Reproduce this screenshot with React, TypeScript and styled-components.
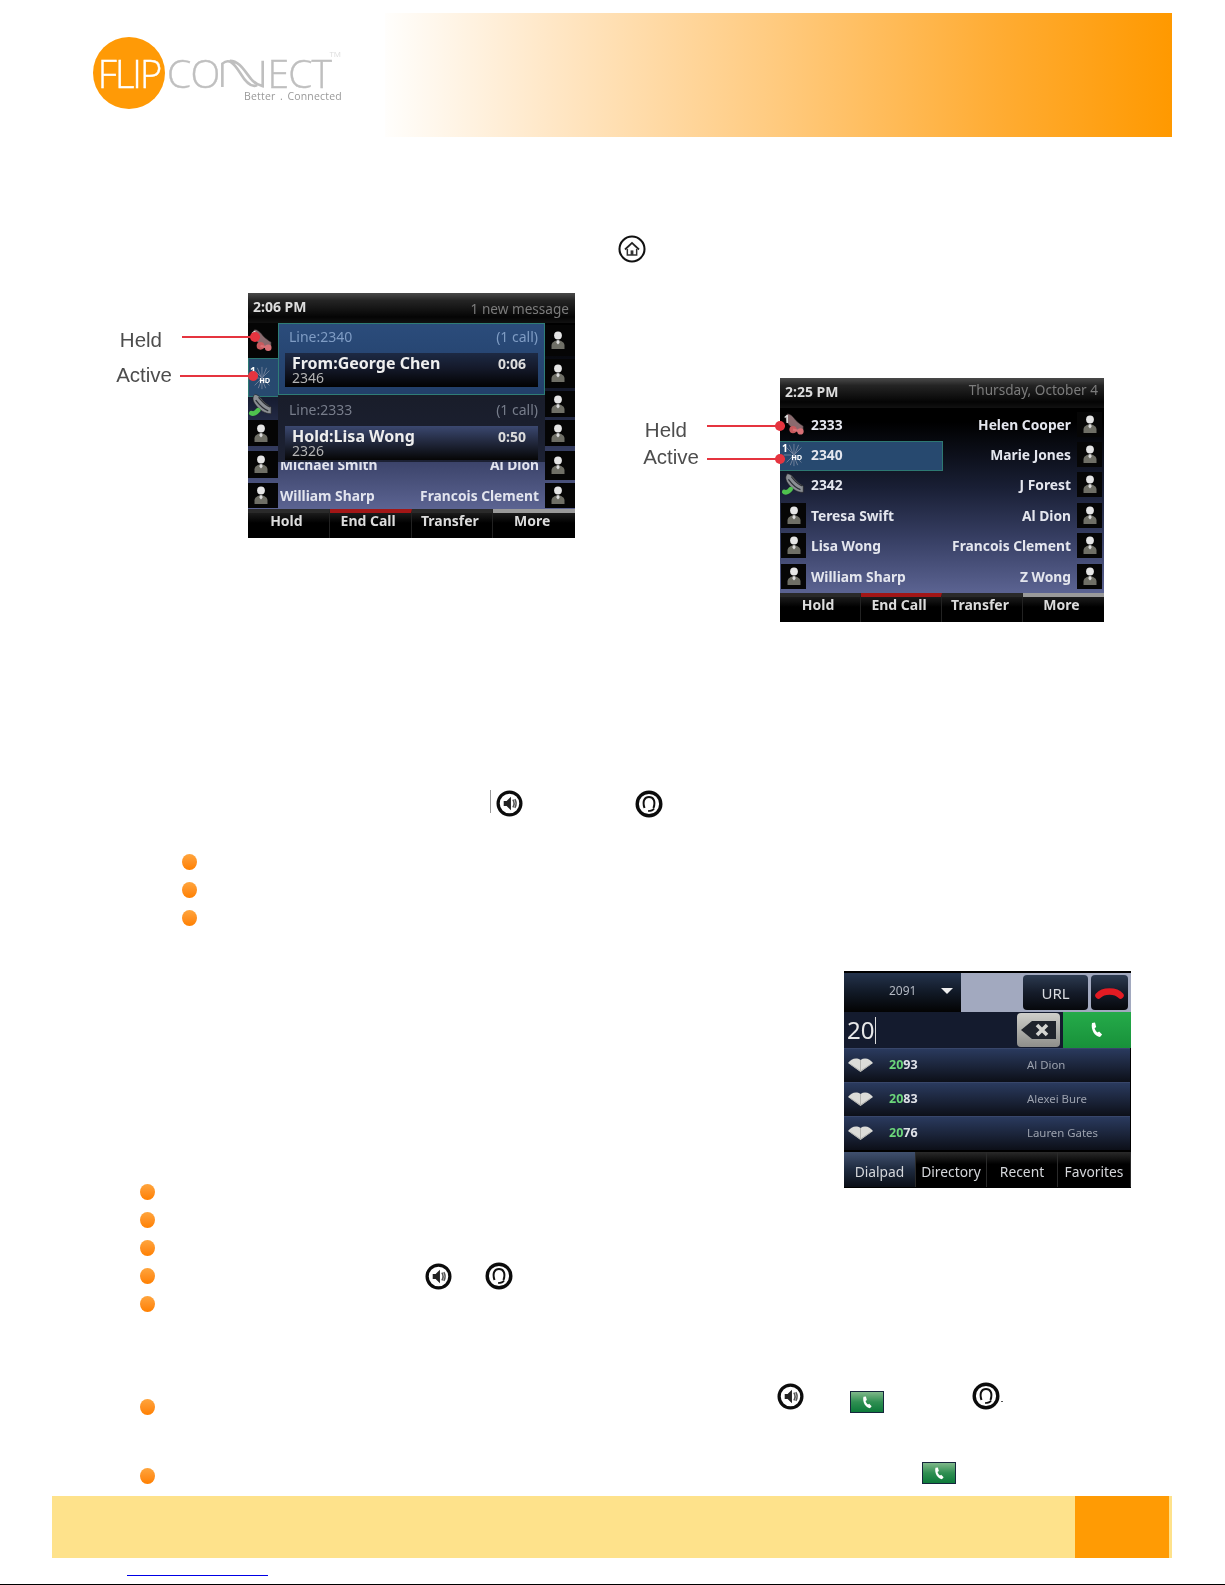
import React from "react";
import styled, { createGlobalStyle } from "styled-components";

const GlobalStyle = createGlobalStyle`
  html, body {
    margin: 0;
    padding: 0;
    background: #fff;
  }
  body {
    font-family: "Noto Sans", "Open Sans", sans-serif;
  }
`

const Page = styled.div`
  width: 1225px;
  height: 1585px;
  overflow: hidden;
  display: flex;
  flex-direction: column;
  background: #fff;
`

/* header */

const Header = styled.header`
  display: flex;
  margin-top: 13px;
  height: 124px;
  padding-left: 93px;
`

const LogoWrap = styled.div`
  display: flex;
  width: 292px;
  padding-top: 24px;
  gap: 2px;
`

const LogoCircle = styled.div`
  width: 72px;
  height: 72px;
  flex: none;
  border-radius: 50%;
  background: #ff9a06;
  color: #fff;
  display: flex;
  align-items: center;
  justify-content: center;
  font: 300 38px "Open Sans", sans-serif;
  letter-spacing: -2px;
  -webkit-text-stroke: .4px #fff;
  filter: blur(.3px);
`

const Wordmark = styled.div`
  position: relative;
  display: flex;
  flex-direction: column;
  align-items: flex-end;
  padding-top: 21px;
  width: 176px;
  filter: blur(.3px);
`

const WordLine = styled.div`
  display: flex;
  align-items: center;
  height: 30px;
  width: 100%;
  color: #bfbfbf;
  font: 300 39px/30px "Open Sans", sans-serif;
  letter-spacing: -.8px;
  -webkit-text-stroke: .4px #bfbfbf;
`

const Tagline = styled.div`
  margin: 2px 1px 0 0;
  color: #999;
  font: 400 10.5px/13px "Open Sans", sans-serif;
  letter-spacing: .2px;
  word-spacing: 1.5px;
  white-space: pre;
`

const TradeMark = styled.span`
  position: absolute;
  top: 12px;
  right: 2px;
  color: #ddd;
  font: 400 8px/9px "Open Sans", sans-serif;
`

const Banner = styled.div`
  width: 787px;
  background: linear-gradient(90deg, #fffefc 0%, #ffe6c4 22%, #ffca7e 50%, #ffac33 78%, #ff9900 100%);
`

/* icon rows */

const HomeRow = styled.div`
  margin-top: 98px;
  height: 31px;
  padding-left: 618px;
`

const RingSvg = styled.svg`
  display: block;
  flex: none;
  filter: blur(.45px);
`

const FigureRow = styled.div`
  display: flex;
  align-items: flex-start;
  margin-top: 27px;
  padding-left: 248px;
  gap: 205px;
`

const Figure = styled.figure<{ $offset: number }>`
  position: relative;
  margin: ${({ $offset }) => $offset}px 0 0;
`

const Callout = styled.div<{ $top: number; $dotRight: number; $gap: number }>`
  position: absolute;
  top: ${({ $top }) => $top}px;
  right: calc(100% - ${({ $dotRight }) => $dotRight}px);
  z-index: 2;
  display: flex;
  align-items: center;
  gap: ${({ $gap }) => $gap}px;
  height: 24px;
`

const CalloutLabel = styled.span<{ $shift: number }>`
  color: #4d4d4d;
  font: 400 20.5px/24px "Liberation Sans", Arial, sans-serif;
  transform: translateY(${({ $shift }) => $shift}px);
  filter: blur(.35px);
`

const CalloutLine = styled.span`
  position: relative;
  display: block;
  width: 78px;
  height: 2.5px;
  background: #e5343f;

  &::after {
    content: "";
    position: absolute;
    right: 0;
    top: -4px;
    width: 10px;
    height: 10px;
    border-radius: 50%;
    background: #e5343f;
  }
`

/* phone screens */

const Screen = styled.div<{ $w: number; $h: number }>`
  width: ${({ $w }) => $w}px;
  height: ${({ $h }) => $h}px;
  display: flex;
  flex-direction: column;
  overflow: hidden;
  color: #e6e6e6;
  font-family: "Noto Sans", sans-serif;
  filter: blur(.5px);
  background: linear-gradient(180deg, #000 0%, #000 18%, #191f35 45%, #3a4268 68%, #626a9a 92%);
`

const TopBar = styled.div`
  height: 30px;
  flex: none;
  display: flex;
  align-items: center;
  justify-content: space-between;
  padding: 0 6px 0 5px;
  background: linear-gradient(180deg, #4a4a4a 0%, #242424 25%, #050505 80%, #111 100%);
`

const Clock = styled.span`
  margin-bottom: 4px;
  font-size: 14px;
  font-weight: 700;
  color: #ddd;
`

const Status = styled.span<{ $lift?: number }>`
  margin-bottom: ${({ $lift }) => $lift || 0}px;
  font-size: 13.6px;
  color: #7c7c7c;
`

const ScreenBody = styled.div`
  flex: 1;
  min-height: 0;
  display: flex;
`

const KeyColumn = styled.div<{ $w: number }>`
  width: ${({ $w }) => $w}px;
  flex: none;
  display: flex;
  flex-direction: column;
`

const KeyCell = styled.div<{ $h: number; $mt?: number; $pb?: number; $tone?: "black" | "active" | "none" }>`
  height: ${({ $h }) => $h}px;
  box-sizing: border-box;
  margin-top: ${({ $mt }) => $mt || 0}px;
  padding: 0 4px ${({ $pb }) => $pb || 0}px 0;
  flex: none;
  display: flex;
  align-items: center;
  justify-content: center;
  background: ${({ $tone }) => ($tone === "active" ? "#27496f" : $tone === "none" ? "transparent" : "#050505")};
  border: ${({ $tone }) => ($tone === "active" ? "1px solid #2d7872" : "0")};
  border-right: 0;
`

const CenterColumn = styled.div`
  flex: 1;
  min-width: 0;
  display: flex;
  flex-direction: column;
`

const LinePanel = styled.div<{ $active?: boolean; $h: number }>`
  position: relative;
  z-index: 1;
  height: ${({ $h }) => $h}px;
  flex: none;
  box-sizing: border-box;
  padding: ${({ $active }) => ($active ? "3px 6px 0 6px" : "5px 7px 0 7px")};
  border: ${({ $active }) => ($active ? "1px solid #2f7d76" : "0")};
  background: ${({ $active }) =>
    $active ? "linear-gradient(180deg, #2b4c7b, #223f69)" : "linear-gradient(180deg, #191d2a, #1c2133)"};
`

const LineHead = styled.div<{ $active?: boolean }>`
  display: flex;
  justify-content: space-between;
  padding-left: 4px;
  font-size: 14px;
  line-height: 19px;
  color: ${({ $active }) => ($active ? "#7f9cc4" : "#777d8b")};
`

const CallBox = styled.div<{ $held?: boolean }>`
  display: flex;
  justify-content: space-between;
  box-sizing: border-box;
  height: 34px;
  margin-top: 7px;
  padding: 1px 12px 0 7px;
  background: ${({ $held }) =>
    $held
      ? "linear-gradient(180deg, #3b4870 0%, #232a40 45%, #060606 100%)"
      : "linear-gradient(180deg, #1d2a44 0%, #14192a 45%, #020202 100%)"};
`

const CallText = styled.div`
  display: flex;
  flex-direction: column;
`

const CallName = styled.span`
  font-size: 16px;
  font-weight: 700;
  line-height: 19px;
  color: #eee;
`

const CallNumber = styled.span`
  font-size: 14px;
  line-height: 10px;
  color: #b4b4b4;
`

const CallTime = styled.span`
  font-size: 14px;
  font-weight: 700;
  line-height: 19px;
  color: #ddd;
`

const ContactRow = styled.div<{ $under?: boolean }>`
  display: flex;
  align-items: center;
  justify-content: space-between;
  height: 31px;
  flex: none;
  margin-top: ${({ $under }) => ($under ? "-13px" : "0")};
  padding: 0 6px 0 2px;
  font-size: 13.8px;
  font-weight: 700;
  color: #e2e4ee;
`

const SoftKeys = styled.div`
  height: 29px;
  flex: none;
  display: grid;
  grid-template-columns: repeat(4, 1fr);
  background: #000;
`

const SoftKey = styled.div<{ $mark?: string }>`
  display: flex;
  align-items: center;
  justify-content: center;
  padding: 0 4px 10px 0;
  font-size: 14px;
  line-height: 14px;
  font-weight: 700;
  color: #dcdcdc;
  border-top: 4px solid ${({ $mark }) => $mark || "#2a2a2a"};
  border-right: 1px solid #222;
  background: linear-gradient(180deg, #1c1c1c, #000 40%);

  &:last-child {
    border-right: 0;
  }
`

const ListGrid = styled.div`
  flex: 1;
  min-height: 0;
  padding-top: 1px;
  display: flex;
  flex-direction: column;
`

const ListRow = styled.div`
  height: 30.4px;
  flex: none;
  display: flex;
  align-items: center;
  justify-content: space-between;
  font-size: 13.8px;
  font-weight: 700;
  color: #e4e6ee;
`

const LineSide = styled.div<{ $active?: boolean }>`
  display: flex;
  align-items: center;
  gap: 5px;
  box-sizing: border-box;
  width: 163px;
  height: 30px;
  margin-top: ${({ $active }) => ($active ? 3 : 0)}px;
  padding-left: 1px;
  padding-bottom: ${({ $active }) => ($active ? 3 : 0)}px;
  background: ${({ $active }) => ($active ? "#27496f" : "transparent")};
  border: ${({ $active }) => ($active ? "1px solid #2d7872" : "1px solid transparent")};
  border-left: 0;
`

const LeftTile = styled.div<{ $black?: boolean }>`
  width: 25px;
  height: 25px;
  flex: none;
  display: flex;
  align-items: center;
  justify-content: center;
  background: ${({ $black }) => ($black ? "#060606" : "transparent")};
`

const ContactSide = styled.div`
  display: flex;
  align-items: center;
  gap: 6px;
  padding-right: 2px;
`

/* dial screen */

const DialSection = styled.section`
  margin-top: 45px;
  height: 347px;
  flex: none;
  display: grid;
  grid-template-columns: 844px 287px;
`

const DialScreen = styled.div`
  height: 217px;
  display: flex;
  flex-direction: column;
  overflow: hidden;
  background: #000;
  color: #ddd;
  font-family: "Noto Sans", sans-serif;
  filter: blur(.45px);
  border-top: 2px solid #000;
  box-sizing: border-box;
`

const DialTop = styled.div`
  height: 39px;
  flex: none;
  display: flex;
  background: #a2a9bf;
`

const LineSelect = styled.div`
  width: 117px;
  display: flex;
  align-items: center;
  gap: 25px;
  padding: 0 0 4px 45px;
  box-sizing: border-box;
  font-size: 12px;
  color: #b3b8c2;
  background: linear-gradient(180deg, #24334c 0%, #111926 50%, #030303 100%);
`

const Caret = styled.span`
  width: 0;
  height: 0;
  border-left: 6px solid transparent;
  border-right: 6px solid transparent;
  border-top: 6px solid #eee;
`

const TopButtons = styled.div`
  flex: 1;
  display: flex;
  justify-content: flex-end;
  gap: 3px;
  padding: 2px 3px 2px 0;
`

const TopButton = styled.div<{ $w: number }>`
  width: ${({ $w }) => $w}px;
  display: flex;
  align-items: center;
  justify-content: center;
  font-size: 15px;
  line-height: 20px;
  color: #d8dbe0;
  border-radius: 4px;
  background: linear-gradient(180deg, #2c3a50 0%, #151c2a 50%, #06080c 100%);
`

const InputRow = styled.div`
  height: 36px;
  flex: none;
  display: flex;
  align-items: center;
  background: #141b2e;
`

const DialedNumber = styled.div`
  flex: 1;
  padding-left: 3px;
  font-size: 24px;
  line-height: 30px;
  color: #e8e8e8;
`

const Cursor = styled.span`
  display: inline-block;
  width: 1px;
  height: 27px;
  margin-left: 1px;
  vertical-align: -5px;
  background: #ddd;
`

const BackspaceKey = styled.div`
  width: 43px;
  height: 34px;
  margin-right: 3px;
  display: flex;
  align-items: center;
  justify-content: center;
  border-radius: 4px;
  background: linear-gradient(180deg, #cfcfca, #8e8e8a);
`

const CallKey = styled.div`
  width: 68px;
  height: 36px;
  display: flex;
  align-items: center;
  justify-content: center;
  background: linear-gradient(180deg, #25ab4a, #18913a);
`

const ResultRow = styled.div`
  height: 34px;
  flex: none;
  box-sizing: border-box;
  display: flex;
  align-items: center;
  padding: 0 0 2px 4px;
  margin-right: 1px;
  border-top: 1px solid #38466a;
  background: linear-gradient(180deg, #2a3a5e 0%, #1a2338 55%, #0c0f18 100%);
`

const ResultNumber = styled.span`
  width: 138px;
  margin-left: 16px;
  font-size: 12.5px;
  font-weight: 700;
  color: #dfe2e8;
`

const Match = styled.span`
  color: #6bd67a;
`

const ResultName = styled.span`
  font-size: 11.4px;
  color: #9ca2ae;
`

const DialTabs = styled.div`
  flex: none;
  margin-top: 2px;
  height: 35px;
  display: grid;
  grid-template-columns: 72px 71px 71px 73px;
`

const DialTab = styled.div<{ $active?: boolean }>`
  display: flex;
  align-items: center;
  justify-content: center;
  padding-top: 3px;
  font-size: 13.8px;
  color: #d4d6da;
  border-right: 1px solid #2a2a2a;
  background: ${({ $active }) =>
    $active ? "linear-gradient(180deg, #40506e, #1e2a3e 50%, #0a0e16)" : "linear-gradient(180deg, #2a2a2a, #000 35%)"};
`

/* bullets */

const Bullet = styled.span`
  display: block;
  flex: none;
  width: 15px;
  height: 16px;
  border-radius: 50%;
  background: linear-gradient(180deg, #ffa53d 0%, #ff9020 55%, #ff8000 100%);
`

const SpeakerRow = styled.div`
  display: flex;
  margin-top: 168px;
  height: 29px;
  padding-left: 490px;
`

const Divider = styled.span`
  width: 1px;
  height: 23px;
  background: #999;
  margin-right: 5px;
`

const ShortList = styled.div`
  display: flex;
  flex-direction: column;
  gap: 12px;
  margin-top: 35px;
  padding-left: 182px;
`

const SideList = styled.div`
  align-self: end;
  display: flex;
  flex-direction: column;
  padding-left: 140px;
`

const SideItem = styled.div`
  height: 28px;
  display: flex;
  align-items: center;
`

const StepRow = styled.div<{ $mt: number; $h: number; $align: string }>`
  display: flex;
  margin-top: ${({ $mt }) => $mt}px;
  height: ${({ $h }) => $h}px;
  padding-left: 140px;
  align-items: ${({ $align }) => $align};
`

const Spaced = styled.div<{ $ml: number; $mt?: number }>`
  margin-left: ${({ $ml }) => $ml}px;
  margin-top: ${({ $mt }) => $mt || 0}px;
  flex: none;
`

const Period = styled.span`
  margin: 18px 0 0 1px;
  width: 2px;
  height: 1px;
  background: #555;
`

const CallChip = styled.div`
  width: 34px;
  height: 22px;
  box-sizing: border-box;
  display: flex;
  align-items: center;
  justify-content: center;
  border: 1px solid #15263c;
  background: linear-gradient(180deg, #7fb88a 0%, #2f8f52 50%, #0d7a3a 100%);
  filter: blur(.25px);
`

/* footer */

const Footer = styled.footer`
  flex: none;
  display: flex;
  justify-content: flex-end;
  margin: 12px 0 0 52px;
  width: 1120px;
  height: 62px;
  background: #fee28b;
`

const PageTab = styled.div`
  width: 94px;
  margin-right: 3px;
  background: #ff9b04;
`

const LinkLine = styled.div`
  flex: none;
  margin: 17px 0 0 127px;
  width: 141px;
  height: 1px;
  background: #0000e6;
`

const BottomRule = styled.div`
  flex: none;
  margin-top: 8px;
  height: 1px;
  background: #000;
`

/* drawings */

function Ring({ size, children }: { size: number; children: React.ReactNode }) {
  return (
    <RingSvg width={size} height={size} viewBox="0 0 28 28">
      <circle cx="14" cy="14" r="11.8" fill="#fff" stroke="#0c0c0c" strokeWidth="3.4" />
      {children}
    </RingSvg>
  )
}

function SpeakerIcon({ size = 27 }: { size?: number }) {
  return (
    <Ring size={size}>
      <path d="M8 11.5h3l4.5-4.5v14l-4.5-4.5H8z" fill="#222" />
      <path d="M17.5 10q2.5 4 0 8M19.5 9.5q2.8 4.5 0 9" fill="none" stroke="#555" strokeWidth="1.6" />
    </Ring>
  )
}

function HeadsetIcon({ size = 28 }: { size?: number }) {
  return (
    <Ring size={size}>
      <path d="M9.5 18C7 10.5 10 7 14 7s7 3.5 4.5 11" fill="none" stroke="#111" strokeWidth="2" />
      <path d="M19 18.5c-1 2-3 2.5-6 2.5" fill="none" stroke="#111" strokeWidth="1.7" />
    </Ring>
  )
}

function HomeIcon() {
  return (
    <RingSvg width="28" height="28" viewBox="0 0 30 30">
      <circle cx="15" cy="15" r="13.4" fill="#fff" stroke="#111" strokeWidth="2.2" />
      <path d="M7.5 15.5 15 8.5l7.5 7" fill="none" stroke="#222" strokeWidth="2" />
      <path d="M10 15v6.5h10V15" fill="none" stroke="#333" strokeWidth="1.6" />
      <rect x="13.5" y="16.5" width="3" height="5" fill="#333" />
    </RingSvg>
  )
}

function ContactIcon() {
  return (
    <svg width="18" height="21" viewBox="0 0 18 21">
      <circle cx="9" cy="5.5" r="3.9" fill="#e6e6e6" />
      <path d="M2.5 19v-3.5c0-3 3-5 6.5-5s6.5 2 6.5 5V19z" fill="#6f6f66" />
      <path d="M7.8 10.3h2.4l.4 2.5L9 14.5l-1.6-1.7z" fill="#dcdcdc" />
    </svg>
  )
}

function HandsetShape({ color }: { color: string }) {
  return (
    <path
      d="M7 2c3 0 6 3 9 7 3 3 6 5 8 6v7c-7 0-12-4-16-9C5 9 4 5 7 2z"
      fill={color}
      stroke="#222"
      strokeWidth=".6"
    />
  )
}

function LineIcon({ kind }: { kind: "held" | "active" | "ready" }) {
  if (kind === "active") {
    return (
      <svg width="27" height="28" viewBox="0 0 27 28">
        <g stroke="#74829b" strokeWidth="1">
          <path d="M14 2v24M6 6l16 16M22 6 6 22M3 14h8M9 3l9 22M19 3l-9 22" />
        </g>
        <text x="1" y="11" fontSize="11" fontWeight="700" fill="#fff" fontFamily="Noto Sans">1</text>
        <text x="11" y="19" fontSize="8" fontWeight="700" fill="#fff" fontFamily="Noto Sans">HD</text>
      </svg>
    )
  }
  if (kind === "ready") {
    return (
      <svg width="27" height="27" viewBox="0 0 27 27">
        <HandsetShape color="#8b8f94" />
        <path d="M11 5c3 3 6 8 12 10M8 8c3 4 7 9 13 11" fill="none" stroke="#2c2f34" strokeWidth="1.3" />
        <path d="M3.5 21.5c2 1 5-.5 7-3" fill="none" stroke="#4fc24e" strokeWidth="5" strokeLinecap="round" />
      </svg>
    )
  }
  return (
    <svg width="27" height="27" viewBox="0 0 27 27">
      <HandsetShape color="#8a6a6e" />
      <text x="3" y="12" fontSize="11" fontWeight="700" fill="#ddd" fontFamily="Noto Sans">1</text>
      <circle cx="13" cy="19" r="4" fill="#c95a5e" />
      <circle cx="21" cy="21" r="3.4" fill="#d87076" />
      <path d="M13 19l8 2" stroke="#d87076" strokeWidth="2.4" />
    </svg>
  )
}

function BookIcon() {
  return (
    <svg width="25" height="15" viewBox="0 0 25 15">
      <path d="M0 6c3-4 8-6 12.5-3C17 0 22 2 25 6l-12.5 9z" fill="#dcdcd8" />
      <path d="M12.5 3v12M2 7l10.5 7M23 7l-10.5 7" stroke="#a8a8a4" strokeWidth=".8" fill="none" />
    </svg>
  )
}

function Handset({ size, color = "#fff" }: { size: number; color?: string }) {
  return (
    <svg width={size} height={size} viewBox="0 0 16 16">
      <path d="M3 1l3-.5L7.2 5 5.6 6.2c.5 1.8 1.5 3.3 3 4.3l1.5-1 3 3L11 15C6 14.5 1.5 8 3 1z" fill={color} />
    </svg>
  )
}

function HangUp() {
  return (
    <svg width="29" height="12" viewBox="0 0 29 12">
      <path d="M3.5 8.5C8 3 21 3 25.5 8.5" fill="none" stroke="#e31b23" strokeWidth="6.5" strokeLinecap="round" />
    </svg>
  )
}

function BackspaceGlyph() {
  return (
    <svg width="35" height="20" viewBox="0 0 35 20">
      <path d="M0 10 11 1h24v18H11z" fill="#20242c" />
      <path d="M16 5l10 10M26 5 16 15" stroke="#d4d4d0" strokeWidth="3.6" />
    </svg>
  )
}

function LogoWave() {
  return (
    <svg width="48" height="30" viewBox="0 0 48 32">
      <path
        d="M2 31V6C9 0 14 5 21 16c6 10 12 16 18 13M10 3c11 0 16 12 24 21 3 3 7 5 11 6V3"
        fill="none"
        stroke="#bfbfbf"
        strokeWidth="2.8"
      />
    </svg>
  )
}

/* data */

const softKeys = [
  { label: "Hold" },
  { label: "End Call", mark: "#a21616" },
  { label: "Transfer" },
  { label: "More", mark: "#9a9a9a" },
]

const firstRight = [
  { h: 31, mt: 2 },
  { h: 29, mt: 3 },
  { h: 26, mt: 3 },
  { h: 26, mt: 3 },
  { h: 29, mt: 5 },
  { h: 25, mt: 3 },
]

const lineRows = [
  { left: "2333", right: "Helen Cooper", icon: "held" as const },
  { left: "2340", right: "Marie Jones", icon: "active" as const, active: true },
  { left: "2342", right: "J Forest", icon: "ready" as const },
  { left: "Teresa Swift", right: "Al Dion" },
  { left: "Lisa Wong", right: "Francois Clement" },
  { left: "William Sharp", right: "Z Wong" },
]

const results = [
  { match: "20", rest: "93", name: "Al Dion" },
  { match: "20", rest: "83", name: "Alexei Bure" },
  { match: "20", rest: "76", name: "Lauren Gates" },
]

function SoftKeyBar() {
  return (
    <SoftKeys>
      {softKeys.map((key) => (
        <SoftKey key={key.label} $mark={key.mark}>{key.label}</SoftKey>
      ))}
    </SoftKeys>
  )
}

function CallScreen() {
  return (
    <Screen $w={327} $h={245}>
      <TopBar>
        <Clock>2:06 PM</Clock>
        <Status>1 new message</Status>
      </TopBar>
      <ScreenBody>
        <KeyColumn $w={30}>
          <KeyCell $h={35}><LineIcon kind="held" /></KeyCell>
          <KeyCell $h={39} $tone="active"><LineIcon kind="active" /></KeyCell>
          <KeyCell $h={23} $pb={7} $tone="none"><LineIcon kind="ready" /></KeyCell>
          <KeyCell $h={26}><ContactIcon /></KeyCell>
          <KeyCell $h={27} $mt={5}><ContactIcon /></KeyCell>
          <KeyCell $h={25} $mt={5}><ContactIcon /></KeyCell>
        </KeyColumn>
        <CenterColumn>
          <LinePanel $active $h={72}>
            <LineHead $active>
              <span>Line:2340</span>
              <span>(1 call)</span>
            </LineHead>
            <CallBox>
              <CallText>
                <CallName>From:George Chen</CallName>
                <CallNumber>2346</CallNumber>
              </CallText>
              <CallTime>0:06</CallTime>
            </CallBox>
          </LinePanel>
          <LinePanel $h={67}>
            <LineHead>
              <span>Line:2333</span>
              <span>(1 call)</span>
            </LineHead>
            <CallBox $held>
              <CallText>
                <CallName>Hold:Lisa Wong</CallName>
                <CallNumber>2326</CallNumber>
              </CallText>
              <CallTime>0:50</CallTime>
            </CallBox>
          </LinePanel>
          <ContactRow $under>
            <span>Michael Smith</span>
            <span>Al Dion</span>
          </ContactRow>
          <ContactRow>
            <span>William Sharp</span>
            <span>Francois Clement</span>
          </ContactRow>
        </CenterColumn>
        <KeyColumn $w={30}>
          {firstRight.map((cell, i) => (
            <KeyCell key={i} $h={cell.h} $mt={cell.mt}><ContactIcon /></KeyCell>
          ))}
        </KeyColumn>
      </ScreenBody>
      <SoftKeyBar />
    </Screen>
  )
}

function LinesScreen() {
  return (
    <Screen $w={324} $h={244}>
      <TopBar>
        <Clock>2:25 PM</Clock>
        <Status $lift={8}>Thursday, October 4</Status>
      </TopBar>
      <ListGrid>
        {lineRows.map((row) => (
          <ListRow key={row.left}>
            <LineSide $active={row.active}>
              <LeftTile $black={!row.icon}>
                {row.icon ? <LineIcon kind={row.icon} /> : <ContactIcon />}
              </LeftTile>
              <span>{row.left}</span>
            </LineSide>
            <ContactSide>
              <span>{row.right}</span>
              <LeftTile $black><ContactIcon /></LeftTile>
            </ContactSide>
          </ListRow>
        ))}
      </ListGrid>
      <SoftKeyBar />
    </Screen>
  )
}

function DialerScreen() {
  return (
    <DialScreen>
      <DialTop>
        <LineSelect>
          <span>2091</span>
          <Caret />
        </LineSelect>
        <TopButtons>
          <TopButton $w={65}>URL</TopButton>
          <TopButton $w={37}><HangUp /></TopButton>
        </TopButtons>
      </DialTop>
      <InputRow>
        <DialedNumber>20<Cursor /></DialedNumber>
        <BackspaceKey><BackspaceGlyph /></BackspaceKey>
        <CallKey><Handset size={16} /></CallKey>
      </InputRow>
      {results.map((row) => (
        <ResultRow key={row.name}>
          <BookIcon />
          <ResultNumber><Match>{row.match}</Match>{row.rest}</ResultNumber>
          <ResultName>{row.name}</ResultName>
        </ResultRow>
      ))}
      <DialTabs>
        <DialTab $active>Dialpad</DialTab>
        <DialTab>Directory</DialTab>
        <DialTab>Recent</DialTab>
        <DialTab>Favorites</DialTab>
      </DialTabs>
    </DialScreen>
  )
}

export default function App() {
  return (
    <Page>
      <GlobalStyle />
      <Header>
        <LogoWrap>
          <LogoCircle>FLIP</LogoCircle>
          <Wordmark>
            <WordLine>
              <span>CO</span>
              <LogoWave />
              <span>ECT</span>
            </WordLine>
            <Tagline>Better . Connected</Tagline>
            <TradeMark>TM</TradeMark>
          </Wordmark>
        </LogoWrap>
        <Banner />
      </Header>

      <HomeRow><HomeIcon /></HomeRow>

      <FigureRow>
        <Figure $offset={0}>
          <Callout $top={32} $dotRight={12} $gap={20}>
            <CalloutLabel $shift={3}>Held</CalloutLabel>
            <CalloutLine />
          </Callout>
          <Callout $top={71} $dotRight={10} $gap={8}>
            <CalloutLabel $shift={-1}>Active</CalloutLabel>
            <CalloutLine />
          </Callout>
          <CallScreen />
        </Figure>
        <Figure $offset={85}>
          <Callout $top={36} $dotRight={5} $gap={20}>
            <CalloutLabel $shift={4}>Held</CalloutLabel>
            <CalloutLine />
          </Callout>
          <Callout $top={69} $dotRight={5} $gap={8}>
            <CalloutLabel $shift={-2}>Active</CalloutLabel>
            <CalloutLine />
          </Callout>
          <LinesScreen />
        </Figure>
      </FigureRow>

      <SpeakerRow>
        <Divider />
        <SpeakerIcon />
        <Spaced $ml={112}><HeadsetIcon /></Spaced>
      </SpeakerRow>

      <ShortList>
        <Bullet />
        <Bullet />
        <Bullet />
      </ShortList>

      <DialSection>
        <SideList>
          <SideItem><Bullet /></SideItem>
          <SideItem><Bullet /></SideItem>
          <SideItem><Bullet /></SideItem>
          <SideItem>
            <Bullet />
            <Spaced $ml={270}><SpeakerIcon /></Spaced>
            <Spaced $ml={33}><HeadsetIcon /></Spaced>
          </SideItem>
          <SideItem><Bullet /></SideItem>
        </SideList>
        <DialerScreen />
      </DialSection>

      <StepRow $mt={65} $h={31} $align="flex-start">
        <Spaced $ml={0} $mt={16}><Bullet /></Spaced>
        <Spaced $ml={622}><SpeakerIcon /></Spaced>
        <Spaced $ml={46} $mt={8}><CallChip><Handset size={13} /></CallChip></Spaced>
        <Spaced $ml={88} $mt={-1}><HeadsetIcon /></Spaced>
        <Period />
      </StepRow>

      <StepRow $mt={48} $h={22} $align="flex-end">
        <Bullet />
        <Spaced $ml={767}><CallChip><Handset size={13} /></CallChip></Spaced>
      </StepRow>

      <Footer><PageTab /></Footer>
      <LinkLine />
      <BottomRule />
    </Page>
  )
}
